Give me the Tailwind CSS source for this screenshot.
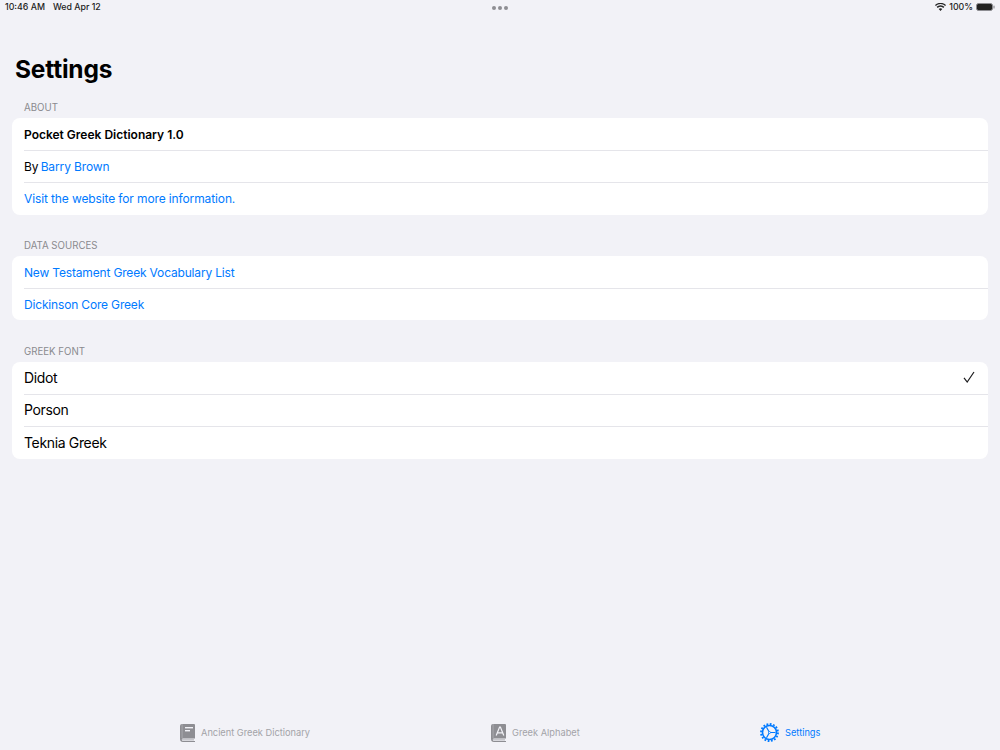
<!DOCTYPE html>
<html lang="en">
<head>
  <meta charset="UTF-8">
  <title>Settings</title>
  <script src="https://cdn.jsdelivr.net/npm/@tailwindcss/browser@4"></script>
</head>
<body class="bg-[#f2f2f7] font-['Inter',sans-serif] text-black">
  <div class="w-[1000px] h-[750px] flex flex-col overflow-hidden">
    <!-- status bar -->
    <div class="h-[15px] px-[5px] flex items-center justify-between text-[8.8px] leading-none text-[#222] font-medium shrink-0">
      <div class="w-[200px] flex gap-[8px]"><span>10:46 AM</span><span>Wed Apr 12</span></div>
      <div class="flex gap-[2px]">
        <span class="w-[4px] h-[4px] rounded-full bg-[#8e8e93]"></span>
        <span class="w-[4px] h-[4px] rounded-full bg-[#8e8e93]"></span>
        <span class="w-[4px] h-[4px] rounded-full bg-[#8e8e93]"></span>
      </div>
      <div class="w-[200px] flex items-center justify-end gap-[2px]">
        <svg width="11" height="8" viewBox="0 0 11 8" class="mr-[1px]"><path d="M5.5 8 3.7 6a2.6 2.6 0 0 1 3.6 0zM2.7 5 1.6 3.8a5.6 5.6 0 0 1 7.8 0L8.3 5a4 4 0 0 0-5.6 0zM.8 3 0 2a8 8 0 0 1 11 0l-.8 1a6.8 6.8 0 0 0-9.4 0z" fill="#222"/></svg>
        <span>100%</span>
        <svg width="19" height="8" viewBox="0 0 19 8" class="ml-[1px]"><rect x=".5" y=".5" width="16" height="7" rx="2" fill="#222" stroke="#8e8e93"/><rect x="17.4" y="2.5" width="1.2" height="3" rx=".6" fill="#8e8e93"/></svg>
      </div>
    </div>

    <h1 class="mt-[38px] pl-[15px] text-[24.5px] leading-[32px] font-bold tracking-[-0.2px]">Settings</h1>

    <div class="mt-[16px] px-[12px] flex flex-col">
      <!-- about -->
      <div class="pl-[12px] h-[17px] text-[9.7px] leading-[14px] text-[#8a8a8e] uppercase">About</div>
      <div class="bg-white rounded-[8px] text-[12px] tracking-[-0.12px]">
        <div class="ml-[12px] h-[33px] pt-[2px] flex items-center border-b border-[#e5e5ea] font-semibold tracking-normal">Pocket Greek Dictionary 1.0</div>
        <div class="ml-[12px] h-[32px] flex items-center border-b border-[#e5e5ea]"><span class="mr-[-1px]">By&nbsp;</span><span class="text-[#007aff]">Barry Brown</span></div>
        <div class="ml-[12px] h-[32px] flex items-center text-[#007aff]">Visit the website for more information.</div>
      </div>

      <!-- data sources -->
      <div class="mt-[24px] pl-[12px] h-[17px] text-[9.7px] leading-[14px] text-[#8a8a8e] uppercase">Data Sources</div>
      <div class="bg-white rounded-[8px] text-[12px] tracking-[-0.12px] text-[#007aff]">
        <div class="ml-[12px] h-[33px] pt-[2px] flex items-center border-b border-[#e5e5ea] tracking-[-0.17px]">New Testament Greek Vocabulary List</div>
        <div class="ml-[12px] h-[31px] flex items-center tracking-[-0.17px]">Dickinson Core Greek</div>
      </div>

      <!-- greek font -->
      <div class="mt-[25px] pl-[12px] h-[17px] text-[9.7px] leading-[14px] text-[#8a8a8e] uppercase">Greek Font</div>
      <div class="bg-white rounded-[8px] text-[14px] tracking-[-0.35px]">
        <div class="ml-[12px] h-[33px] pb-[2px] flex items-center justify-between border-b border-[#e5e5ea] pr-[13px]">
          <span>Didot</span>
          <svg width="12" height="12" viewBox="0 0 12 12" fill="none"><path d="M1 6.8 4.2 11 11 1" stroke="#1c1c1e" stroke-width="1.2"/></svg>
        </div>
        <div class="ml-[12px] h-[32px] pb-[2px] flex items-center border-b border-[#e5e5ea]">Porson</div>
        <div class="ml-[12px] h-[32px] pb-[2px] flex items-center">Teknia Greek</div>
      </div>
    </div>

    <!-- tab bar -->
    <div class="mt-auto h-[36px] pt-[1px] flex text-[9.25px] text-[#a3a3a8] font-normal">
      <div class="w-[360px] pl-[180px] flex items-center gap-[6px]">
        <svg width="15" height="18" viewBox="0 0 15 18">
          <path d="M2 0h12a1 1 0 0 1 1 1v13.5H3a1.2 1.2 0 0 0 0 2.4h12V18H3a3 3 0 0 1-3-3V2a2 2 0 0 1 2-2z" fill="#8e8e93"/>
          <rect x="2" y="15" width="12" height="1.6" fill="#c7c7cc"/>
          <rect x="1.6" y="0" width="1" height="14" fill="#a8a8ad"/>
          <rect x="5" y="3" width="8" height="1.4" fill="#f2f2f7"/>
          <rect x="5" y="6" width="5" height="1.4" fill="#f2f2f7"/>
        </svg>
        <span>Ancient Greek Dictionary</span>
      </div>
      <div class="w-[400px] pl-[131px] flex items-center gap-[6px]">
        <svg width="15" height="18" viewBox="0 0 15 18">
          <path d="M2 0h12a1 1 0 0 1 1 1v13.5H3a1.2 1.2 0 0 0 0 2.4h12V18H3a3 3 0 0 1-3-3V2a2 2 0 0 1 2-2z" fill="#8e8e93"/>
          <rect x="2" y="15" width="12" height="1.6" fill="#c7c7cc"/>
          <rect x="1.6" y="0" width="1" height="14" fill="#a8a8ad"/>
          <path d="M5.2 11.5 8.6 3h.8l3.4 8.5M6.4 8.8h5.2" fill="none" stroke="#f2f2f7" stroke-width="1.2"/>
        </svg>
        <span>Greek Alphabet</span>
      </div>
      <div class="flex items-center gap-[6px] text-[#007aff]">
        <svg width="19" height="19" viewBox="0 0 19 19" fill="none" stroke="#007aff">
          <circle cx="9.5" cy="9.5" r="7" stroke-width="1.6"/>
          <circle cx="9.5" cy="9.5" r="8.5" stroke-width="1.8" stroke-dasharray="1.8 1.54"/>
          <path d="M9.5 9.5h6M9.5 9.5 6.5 4.3M9.5 9.5 6.5 14.7" stroke-width="1.2"/>
          <circle cx="9.5" cy="9.5" r="1" fill="#f2f2f7" stroke-width="0.8"/>
        </svg>
        <span>Settings</span>
      </div>
    </div>
  </div>
</body>
</html>
